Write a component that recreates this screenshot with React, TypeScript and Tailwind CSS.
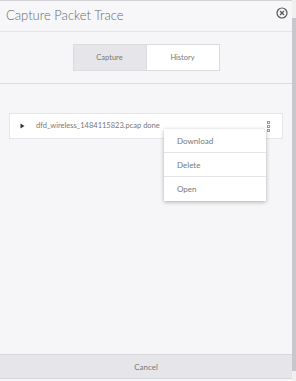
import React from "react";

export default function App() {
  return (
    <div className="w-[296px] h-[381px] flex bg-[#f6f6f9] overflow-hidden" style={{ fontFamily: "Lato, 'Open Sans', sans-serif" }}>
      <div className="flex-1 flex flex-col border-t border-[#d4d4d8] h-[381px]">
        <div className="h-[31px] flex items-center justify-between pl-[6px] pr-[4px] border-b border-[#e4e4e8] bg-[#f7f7fa]">
          <span className="text-[13px] text-[#6a6a6a] font-light">Capture Packet Trace</span>
          <svg width="12" height="12" viewBox="0 0 12 12" className="-mt-[6px]">
            <circle cx="6" cy="6" r="5" fill="none" stroke="#555" strokeWidth="1.2" />
            <path d="M4 4 L8 8 M8 4 L4 8" stroke="#555" strokeWidth="1.2" />
          </svg>
        </div>
        <div className="h-[52px] flex items-center justify-center border-b border-[#dcdce0]">
          <div className="flex border border-[#dcdce0] h-[27px]">
            <div className="w-[73px] flex items-center justify-center bg-[#e6e6ea] text-[7.5px] text-[#777] border-r border-[#dcdce0]">Capture</div>
            <div className="w-[72px] flex items-center justify-center bg-white text-[7.5px] text-[#777]">History</div>
          </div>
        </div>
        <div className="flex-1 px-[9px] pt-[29px] relative">
          <div className="h-[26px] bg-white border border-[#e6e6ea] flex items-center pl-[10px] pr-[12px] w-[274px]">
            <svg width="5" height="6" viewBox="0 0 5 6"><path d="M0.5 0.5 L4.5 3 L0.5 5.5 Z" fill="#333" /></svg>
            <span className="ml-[11px] text-[7.5px] text-[#777] flex-1">dfd_wireless_1484115823.pcap done</span>
            <div className="flex flex-col gap-[1px]">
              <div className="w-[3px] h-[3px] border border-[#999]" />
              <div className="w-[3px] h-[3px] border border-[#999]" />
              <div className="w-[3px] h-[3px] border border-[#999]" />
            </div>
          </div>
          <div className="absolute left-[164px] top-[45px] w-[102px] bg-white shadow-[0_1px_4px_rgba(0,0,0,0.3)] flex flex-col">
            <div className="h-[24px] flex items-center pl-[13px] text-[8px] text-[#777] border-b border-[#e4e4e8]">Download</div>
            <div className="h-[24px] flex items-center pl-[13px] text-[8px] text-[#777] border-b border-[#e4e4e8]">Delete</div>
            <div className="h-[24px] flex items-center pl-[13px] text-[8px] text-[#777]">Open</div>
          </div>
        </div>
        <div className="h-[25px] flex items-center justify-center bg-[#e6e6ea] border-t border-[#d8d8dc] border-b text-[8px] text-[#777] mb-[2px]">Cancel</div>
      </div>
      <div className="w-[4px] flex flex-col bg-[#f0f0f0]">
        <div className="h-[18px]" />
        <div className="flex-1 bg-[#c8c8cc] mb-[10px]" />
      </div>
    </div>
  );
}
